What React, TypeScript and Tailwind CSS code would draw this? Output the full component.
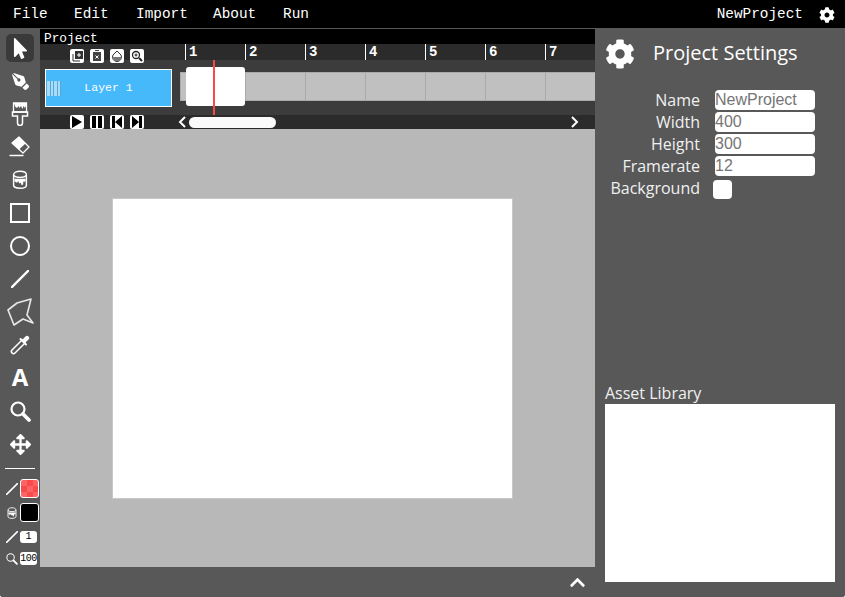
import { FaCog, FaMousePointer, FaPenNib, FaArrowsAlt, FaChevronUp } from "react-icons/fa";

const MONO = "font-['Liberation_Mono',monospace]";
const SANS = "font-['Open_Sans',sans-serif]";

const menuItems = [
  { label: "File", cls: "w-[61px]" },
  { label: "Edit", cls: "w-[62px]" },
  { label: "Import", cls: "w-[77px]" },
  { label: "About", cls: "w-[70px]" },
  { label: "Run", cls: "" },
];

const frameNumbers = [1, 2, 3, 4, 5, 6, 7];

const settings = [
  { label: "Name", value: "NewProject" },
  { label: "Width", value: "400" },
  { label: "Height", value: "300" },
  { label: "Framerate", value: "12" },
];

/* -----------------------------
   TOOL ICONS
----------------------------- */

function BrushIcon() {
  return (
    <svg width="18" height="24" viewBox="0 0 18 24" fill="none" stroke="white" strokeWidth="1.3">
      <path d="M2.500 1h13v9h-13z" />
      <path d="M3 1h12v2.500l-1 2.500-1.500-2-1 3-1.500-3-1.500 2-1-2-1.500 2-2-1.500z" fill="white" stroke="none" />
      <path d="M1.500 10h15v4h-5v7a2.500 2.500 0 0 1-5 0v-7h-5z" strokeWidth="1.500" />
    </svg>
  );
}

function EraserIcon() {
  return (
    <svg width="22" height="22" viewBox="10 136 22 22">
      <path d="M13 143l7-6 10 10-6 6z" fill="none" stroke="white" strokeWidth="1.300" strokeLinejoin="round" />
      <path d="M13 143l7-6 6.500 6.500-6.500 6z" fill="white" />
      <path d="M11 155.500h13" stroke="white" strokeWidth="1.300" strokeLinecap="round" />
    </svg>
  );
}

function BucketIcon({ size = 16 }: { size?: number }) {
  return (
    <svg width={size} height={size * 1.2} viewBox="0 0 20 24" fill="none" stroke="white" strokeWidth="1.800">
      <path d="M2 6c0-6 16-6 16 0v13c0 5-16 5-16 0z" />
      <path d="M2 7c3 3 13 3 16 0" />
      <path d="M3 11h14v3l-2 1-1-1v4l-2 1-1-3-2 1-1-3-2 2-3-2z" fill="white" stroke="none" />
    </svg>
  );
}

function PolygonIcon() {
  return (
    <svg width="28" height="28" viewBox="6 298 28 28" fill="none" stroke="#e8e8e8" strokeWidth="1.600" strokeLinejoin="round">
      <path d="M8 310 L17 303 L31 299 L27 315 L33 323 L23 319 L14 325 Z" />
    </svg>
  );
}

function DropperIcon() {
  return (
    <svg width="22" height="22" viewBox="0 0 22 22" fill="none" stroke="white" strokeWidth="1.500" strokeLinecap="round">
      <path d="M13 6l3 3-10 10c-1 1-2 1-3 0s-1-2 0-3z" strokeLinejoin="round" />
      <path d="M13 6l3.500-3.500c1-1 2-1 3 0s1 2 0 3L16 9z" fill="white" stroke="none" />
      <path d="M11.500 5l5.500 5.500" strokeWidth="2" />
    </svg>
  );
}

function LensIcon({ size = 21, weight = 2.200 }: { size?: number; weight?: number }) {
  return (
    <svg width={size} height={size} viewBox="0 0 21 21" fill="none" stroke="white">
      <circle cx="8" cy="8" r="6.500" strokeWidth={weight} />
      <path d="M13 13l6 6" strokeWidth={weight + 1.500} strokeLinecap="round" />
    </svg>
  );
}

function LineIcon({ size = 18, weight = 2.500 }: { size?: number; weight?: number }) {
  return (
    <svg width={size} height={size} viewBox="0 0 20 20">
      <path d="M1 19 L19 1" stroke="white" strokeWidth={weight} strokeLinecap="round" />
    </svg>
  );
}

function Chevron({ dir }: { dir: "left" | "right" }) {
  return (
    <svg width="8" height="12" viewBox="0 0 8 12" fill="none" stroke="white" strokeWidth="2">
      <path d={dir === "left" ? "M7 1L2 6l5 5" : "M1 1l5 5-5 5"} />
    </svg>
  );
}

function ToolButton({ children, active }: { children: React.ReactNode; active?: boolean }) {
  return (
    <div className={`w-[28px] h-[28px] mb-[5px] flex items-center justify-center rounded-[5px] text-white ${active ? "bg-[#3a3a3a]" : ""}`}>
      {children}
    </div>
  );
}

function Toolbar() {
  return (
    <div className="w-[40px] shrink-0 bg-[#585858] flex flex-col items-center pt-[5px]">
      <ToolButton active><FaMousePointer size={21} /></ToolButton>
      <ToolButton><FaPenNib size={17} className="rotate-90" /></ToolButton>
      <ToolButton><BrushIcon /></ToolButton>
      <ToolButton><EraserIcon /></ToolButton>
      <ToolButton><BucketIcon /></ToolButton>
      <ToolButton><div className="w-[20px] h-[20px] border-2 border-white" /></ToolButton>
      <ToolButton><div className="w-[20px] h-[20px] rounded-full border-[2.5px] border-white" /></ToolButton>
      <ToolButton><LineIcon /></ToolButton>
      <ToolButton><PolygonIcon /></ToolButton>
      <ToolButton><DropperIcon /></ToolButton>
      <ToolButton><span className={`text-[24px] leading-[28px] font-bold -translate-y-[1px] ${SANS}`}>A</span></ToolButton>
      <ToolButton><LensIcon /></ToolButton>
      <ToolButton><FaArrowsAlt size={21} /></ToolButton>

      <div className="w-[30px] h-px bg-white mt-[5px] mb-[10px]" />

      <div className="w-full flex items-center pl-[6px] gap-[2px] mb-[5px] h-[19px]">
        <LineIcon size={12} weight={2.500} />
        <div className="w-[19px] h-[19px] rounded-[3px] border border-white bg-[repeating-conic-gradient(#f84a4a_0_25%,#fb6464_0_50%)] bg-[length:12px_12px]" />
      </div>
      <div className="w-full flex items-center pl-[7px] gap-[3px] mb-[8px] h-[19px]">
        <BucketIcon size={10} />
        <div className="w-[19px] h-[19px] rounded-[3px] border border-white bg-black" />
      </div>
      <div className="w-full flex items-center pl-[6px] gap-[2px] mb-[9px] h-[13px]">
        <LineIcon size={12} weight={2.500} />
        <div className={`w-[17px] h-[12px] rounded-[3px] bg-white text-black text-[10px] leading-[12px] text-center ${MONO}`}>1</div>
      </div>
      <div className="w-full flex items-center pl-[6px] gap-[2px] h-[13px]">
        <LensIcon size={12} weight={1.800} />
        <div className={`w-[17px] h-[13px] rounded-[3px] bg-white text-black text-[10px] leading-[13px] tracking-[-0.5px] text-center ${MONO}`}>100</div>
      </div>
    </div>
  );
}

/* -----------------------------
   TIMELINE
----------------------------- */

function SmallButton({ children }: { children: React.ReactNode }) {
  return (
    <div className="w-[14px] h-[14px] rounded-[2px] bg-white flex items-center justify-center">
      {children}
    </div>
  );
}

function Timeline() {
  return (
    <div className="shrink-0">
      <div className={`h-[15px] bg-black text-white text-[12.800px] leading-[19px] pl-[4px] ${MONO}`}>Project</div>

      <div className="h-[16px] bg-[#2b2b2b] flex">
        <div className="w-[135px] shrink-0 flex gap-[6px] pl-[30px] pt-[5px] h-[20px] relative z-10">
          <SmallButton>
            <svg width="11" height="11" viewBox="0 0 11 11"><path d="M3 0h8v8H3z" fill="#333" /><path d="M1 3v7h7" fill="none" stroke="#333" /><path d="M5 4h4M7 2v4" stroke="white" /></svg>
          </SmallButton>
          <SmallButton>
            <svg width="10" height="12" viewBox="0 0 10 12"><path d="M1 2h8v9H1z" fill="#444" /><path d="M3.500 5.500l3 3M6.500 5.500l-3 3" stroke="white" /><path d="M3 0.500h4" stroke="#444" /></svg>
          </SmallButton>
          <SmallButton>
            <svg width="12" height="12" viewBox="0 0 12 12"><path d="M6 1l4 4a4.500 4.500 0 1 1-8 0z" fill="none" stroke="#333" /><path d="M2 7h8a4 4 0 0 1-8 0z" fill="#777" /></svg>
          </SmallButton>
          <SmallButton>
            <svg width="12" height="12" viewBox="0 0 12 12"><circle cx="5" cy="5" r="3.500" fill="none" stroke="#222" strokeWidth="1.300" /><path d="M8 8l3 3" stroke="#222" strokeWidth="2" /><path d="M3.500 5h3M5 3.500v3" stroke="#222" /></svg>
          </SmallButton>
        </div>
        <div className="flex pl-[10px]">
          {frameNumbers.map((n) => (
            <div key={n} className={`w-[60px] h-[16px] border-l border-white text-white text-[14px] font-bold leading-[17px] pl-[3px] ${MONO}`}>{n}</div>
          ))}
        </div>
      </div>

      <div className="h-[55px] bg-[#3c3c3c] flex overflow-hidden relative">
        <div className="w-[135px] shrink-0 pl-[5px] pt-[9px]">
          <div className={`w-[127px] h-[38px] bg-[#46b9fb] border border-white flex items-center relative text-white text-[11.500px] ${MONO}`}>
            <div className="absolute left-0 top-[11px] h-[15px] w-[15px] flex gap-[1px] bg-[#5aa6d2] pl-[1px]">
              <div className="w-[2.500px] bg-[#a6dcfc]" />
              <div className="w-[2.500px] bg-[#a6dcfc]" />
              <div className="w-[2.500px] bg-[#a6dcfc]" />
              <div className="w-[2.500px] bg-[#a6dcfc]" />
            </div>
            <span className="w-full text-center">Layer 1</span>
          </div>
        </div>
        <div className="flex pl-[5px] pt-[12px]">
          <div className="w-[66px] h-[29px] shrink-0 bg-[#c0c0c0] border border-[#aaaaaa]" />
          {frameNumbers.map((n) => (
            <div key={n} className="w-[60px] h-[29px] shrink-0 bg-[#c0c0c0] border-y border-r border-[#aaaaaa]" />
          ))}
        </div>
        {/* current frame + playhead sit on top of the track */}
        <div className="absolute left-[146px] top-[7px] w-[59px] h-[39px] bg-white rounded-[3px]" />
        <div className="absolute left-[173px] top-0 w-[2px] h-full bg-[#f84a4a]" />
      </div>

      <div className="h-[14px] bg-[#2b2b2b] flex items-center">
        <div className="w-[135px] shrink-0 flex gap-[6px] pl-[30px]">
          <SmallButton><svg width="10" height="12" viewBox="0 0 10 12"><path d="M0 0l10 6-10 6z" fill="black" /></svg></SmallButton>
          <SmallButton><svg width="10" height="12" viewBox="0 0 10 12"><path d="M0 0h4v12H0zM6 0h4v12H6z" fill="black" /></svg></SmallButton>
          <SmallButton><svg width="10" height="12" viewBox="0 0 10 12"><path d="M0 0h3v12H0zM10 0v12L3 6z" fill="black" /></svg></SmallButton>
          <SmallButton><svg width="10" height="12" viewBox="0 0 10 12"><path d="M10 0H7v12h3zM0 0v12l7-6z" fill="black" /></svg></SmallButton>
        </div>
        <div className="flex-1 flex items-center pl-[3px] pr-[16px]">
          <Chevron dir="left" />
          <div className="w-[87px] h-[11px] rounded-full bg-[#fafafa] ml-[3px]" />
          <div className="ml-auto flex"><Chevron dir="right" /></div>
        </div>
      </div>
    </div>
  );
}

/* -----------------------------
   SETTINGS PANEL
----------------------------- */

function SettingsPanel() {
  return (
    <div className={`w-[250px] shrink-0 bg-[#585858] text-white flex flex-col pl-[10px] ${SANS}`}>
      <div className="flex items-center gap-[18px] mt-[10px] h-[30px]">
        <FaCog size={30} />
        <span className="text-[20px] leading-[28px] -translate-y-[1px]">Project Settings</span>
      </div>

      <div className="mt-[21px] flex flex-col gap-[2px]">
        {settings.map((s) => (
          <div key={s.label} className="flex items-center h-[20px]">
            <div className="w-[95px] text-right text-[16px] leading-[20px] text-[#f0f0f0]">{s.label}</div>
            <div className="ml-[15px] w-[100px] h-[20px] bg-white rounded-[4px] text-[#757575] text-[16px] leading-[20px] font-['Liberation_Sans',sans-serif]">
              {s.value}
            </div>
          </div>
        ))}
        <div className="flex items-center h-[20px]">
          <div className="w-[95px] text-right text-[16px] leading-[20px] text-[#f0f0f0]">Background</div>
          <div className="ml-[13px] w-[19px] h-[19px] mt-[2px] bg-white rounded-[4px]" />
        </div>
      </div>

      <div className="mt-auto text-[16px] leading-[20px] text-[#f0f0f0]">Asset Library</div>
      <div className="w-[230px] h-[178px] bg-white mb-[15px] mt-[1px]" />
    </div>
  );
}

export default function App() {
  return (
    <div className="w-[845px] h-[597px] flex flex-col overflow-hidden bg-[#585858] rounded-b-[3px]">
      <div className={`h-[29px] shrink-0 bg-black border-b border-[#585858] text-white text-[14.400px] pt-[2px] flex items-center pl-[13px] pr-[10px] ${MONO}`}>
        {menuItems.map((m) => (
          <div key={m.label} className={m.cls}>{m.label}</div>
        ))}
        <div className="ml-auto mr-[1px]">NewProject</div>
        <FaCog size={16} className="ml-[15px]" />
      </div>

      <div className="flex flex-1 min-h-0">
        <Toolbar />

        <div className="flex-1 min-w-0 flex flex-col">
          <Timeline />
          <div className="flex-1 bg-[#b8b8b8] pt-[69px] pl-[72px]">
            <div className="w-[401px] h-[301px] bg-white border border-[#c8c8c8]" />
          </div>
          <div className="h-[30px] shrink-0 flex justify-end pr-[9px] pt-[7px] text-white">
            <FaChevronUp size={17} />
          </div>
        </div>

        <SettingsPanel />
      </div>
    </div>
  );
}
